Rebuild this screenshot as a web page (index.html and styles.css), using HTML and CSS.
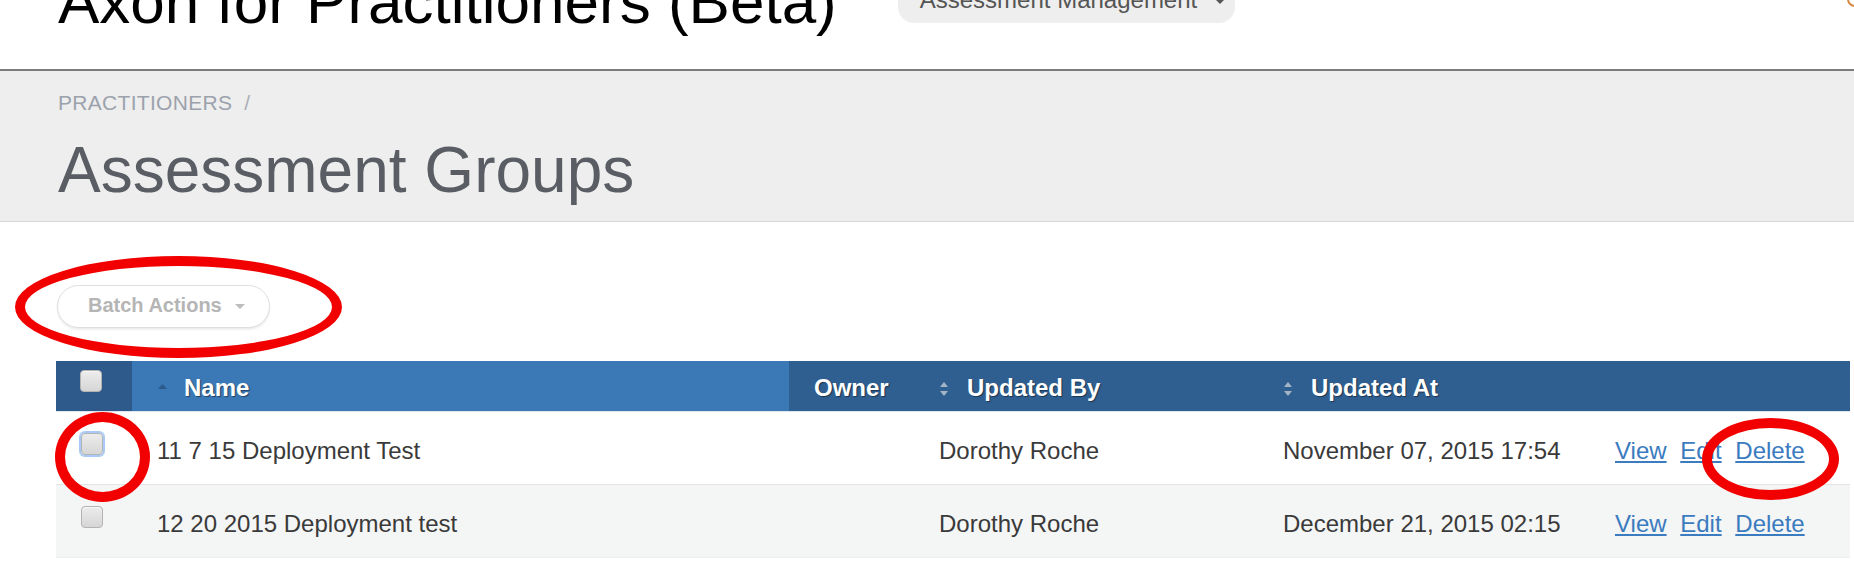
FILE: index.html
```html
<!DOCTYPE html>
<html lang="en">
<head>
<meta charset="utf-8">
<title>Assessment Groups</title>
<link rel="stylesheet" href="styles.css">
</head>
<body>
<div class="page">
  <header class="topbar">
    <h1 class="brand">Axon for Practitioners (Beta)</h1>
    <button class="menu-btn" type="button">Assessment Management<span class="caret caret-dark"></span></button>
    <span class="corner-logo"></span>
  </header>

  <section class="page-head">
    <div class="breadcrumb"><span class="crumb">PRACTITIONERS</span><span class="sep">/</span></div>
    <h2 class="page-title">Assessment Groups</h2>
  </section>

  <main class="content">
    <button class="batch-btn" type="button">Batch Actions<span class="caret caret-light"></span></button>

    <table class="grid">
      <colgroup>
        <col class="c-check">
        <col class="c-name">
        <col class="c-owner">
        <col class="c-by">
        <col class="c-at">
        <col class="c-actions">
      </colgroup>
      <thead>
        <tr>
          <th class="th-check"><span class="cbox"></span></th>
          <th class="th-sorted"><svg class="sort-asc" width="9" height="5" viewBox="0 0 9 5"><polygon points="0,5 4.5,0 9,5" fill="#2c5b8c"/></svg><span class="th-label">Name</span></th>
          <th><span class="th-label">Owner</span></th>
          <th><svg class="sort-both" width="10" height="14" viewBox="0 0 10 14"><polygon points="1,5 5,0 9,5" fill="#a3b4c9"/><polygon points="1,9 5,14 9,9" fill="#a3b4c9"/></svg><span class="th-label">Updated By</span></th>
          <th><svg class="sort-both" width="10" height="14" viewBox="0 0 10 14"><polygon points="1,5 5,0 9,5" fill="#a3b4c9"/><polygon points="1,9 5,14 9,9" fill="#a3b4c9"/></svg><span class="th-label">Updated At</span></th>
          <th></th>
        </tr>
      </thead>
      <tbody>
        <tr>
          <td class="td-check"><span class="cbox cbox-focus"></span></td>
          <td>11 7 15 Deployment Test</td>
          <td></td>
          <td>Dorothy Roche</td>
          <td>November 07, 2015 17:54</td>
          <td class="actions"><a href="#">View</a> <a href="#">Edit</a> <a href="#">Delete</a></td>
        </tr>
        <tr class="alt">
          <td class="td-check"><span class="cbox"></span></td>
          <td>12 20 2015 Deployment test</td>
          <td></td>
          <td>Dorothy Roche</td>
          <td>December 21, 2015 02:15</td>
          <td class="actions"><a href="#">View</a> <a href="#">Edit</a> <a href="#">Delete</a></td>
        </tr>
      </tbody>
    </table>
  </main>

  <div class="mark mark-batch"></div>
  <div class="mark mark-check"></div>
  <div class="mark mark-delete"></div>
</div>
</body>
</html>
```

FILE: styles.css
```css
* {
  box-sizing: border-box;
}

html, body {
  margin: 0;
  padding: 0;
  background: #ffffff;
}

body {
  font-family: "Liberation Sans", Arial, Helvetica, sans-serif;
  color: #3a3a3a;
  overflow: hidden;
}

.page {
  position: relative;
  width: 1854px;
  height: 566px;
  overflow: hidden;
}

/* ---------- top bar ---------- */
.topbar {
  height: 71px;
  display: flex;
  align-items: flex-end;
  padding: 0 0 36px 58px;
  border-bottom: 2px solid #7d7d7d;
  overflow: hidden;
  position: relative;
}

.brand {
  margin: 0;
  font-size: 62px;
  line-height: 62px;
  font-weight: normal;
  color: #000000;
  white-space: nowrap;
}

.menu-btn {
  display: block;
  margin: 0 0 10px 61px;
  padding: 19px 22px 11px 22px;
  width: 337px;
  background: #eeeeee;
  border: none;
  border-radius: 16px;
  font-family: inherit;
  font-size: 24px;
  line-height: 24px;
  color: #555555;
  text-align: left;
  white-space: nowrap;
}

.caret {
  display: inline-block;
  width: 0;
  height: 0;
  border-left: 5px solid transparent;
  border-right: 5px solid transparent;
}

.caret-dark {
  border-top: 5px solid #555555;
  margin-left: 18px;
  vertical-align: middle;
}

.corner-logo {
  position: absolute;
  right: -9px;
  top: -9px;
  width: 16px;
  height: 16px;
  border-radius: 50%;
  border: 2px solid #d48a45;
}

/* ---------- page heading ---------- */
.page-head {
  background: #eeeeee;
  border-bottom: 1px solid #d6d6d6;
  height: 151px;
  padding: 20px 0 0 58px;
}

.breadcrumb {
  font-size: 21px;
  line-height: 24px;
  letter-spacing: 0.3px;
  color: #9ba2ac;
  white-space: nowrap;
}

.breadcrumb .sep {
  margin-left: 12px;
  color: #a9aeb5;
}

.page-title {
  margin: 20px 0 0 0;
  font-size: 64px;
  line-height: 70px;
  font-weight: normal;
  color: #5a5e64;
  white-space: nowrap;
}

/* ---------- content ---------- */
.content {
  padding: 63px 0 0 56px;
}

.batch-btn {
  display: flex;
  align-items: center;
  margin-left: 1px;
  height: 43px;
  padding: 9px 24px 12px 30px;
  background: #ffffff;
  border: 1px solid #dedede;
  border-radius: 22px;
  box-shadow: 0 2px 2px rgba(0, 0, 0, 0.07);
  font-family: inherit;
  font-size: 20px;
  line-height: 20px;
  font-weight: bold;
  color: #b5b5b5;
  white-space: nowrap;
}

.caret-light {
  border-top: 5px solid #bdbdbd;
  margin-left: 13px;
  margin-top: 2px;
}

/* ---------- table ---------- */
.grid {
  margin-top: 33px;
  width: 1794px;
  border-collapse: collapse;
  table-layout: fixed;
  font-size: 24px;
}

.c-check { width: 76px; }
.c-name { width: 657px; }
.c-owner { width: 125px; }
.c-by { width: 344px; }
.c-at { width: 332px; }
.c-actions { width: 260px; }

.grid thead tr {
  background: #2f5f91;
}

.grid th {
  height: 50px;
  padding: 4px 0 0 25px;
  line-height: 46px;
  text-align: left;
  font-weight: bold;
  color: #ffffff;
  white-space: nowrap;
  vertical-align: top;
  border-bottom: 1px solid #dfe6ee;
}

.grid th.th-check {
  background: #2d5a8b;
  padding: 9px 0 0 24px;
  line-height: 0;
}

.grid th.th-sorted {
  background: #3b78b6;
}

.th-label {
  text-shadow: 1px 1px 1px rgba(0, 0, 0, 0.45);
}

.sort-asc {
  display: inline-block;
  vertical-align: 7px;
  margin: 0 17px 0 1px;
}

.sort-both {
  display: inline-block;
  vertical-align: baseline;
  margin-right: 18px;
}

.grid td {
  height: 72px;
  padding: 5px 0 0 25px;
  line-height: 67px;
  vertical-align: top;
  color: #3a3a3a;
  white-space: nowrap;
}

.grid tbody tr {
  border-bottom: 1px solid #e4e4e4;
}

.grid tbody tr.alt {
  background: #f4f5f5;
  border-bottom: 1px solid #eeeeee;
}

.grid td.td-check {
  padding: 21px 0 0 25px;
  line-height: 0;
}

.cbox {
  display: inline-block;
  width: 22px;
  height: 22px;
  border: 1px solid #b3b3b3;
  border-radius: 4px;
  background: linear-gradient(#ececec, #d6d6d6);
  box-shadow: inset 0 1px 1px rgba(255, 255, 255, 0.6);
}

.cbox-focus {
  box-shadow: 0 0 0 2px #a9c9f6;
}

.actions a {
  color: #3b7bbf;
  text-decoration: underline;
  margin-right: 7px;
}

/* ---------- red annotation marks ---------- */
.mark {
  position: absolute;
  border: 10px solid #f20000;
  border-radius: 50%;
  pointer-events: none;
}

.mark-batch {
  left: 15px;
  top: 256px;
  width: 327px;
  height: 102px;
}

.mark-check {
  left: 55px;
  top: 412px;
  width: 95px;
  height: 90px;
}

.mark-delete {
  left: 1702px;
  top: 418px;
  width: 137px;
  height: 82px;
}
```
